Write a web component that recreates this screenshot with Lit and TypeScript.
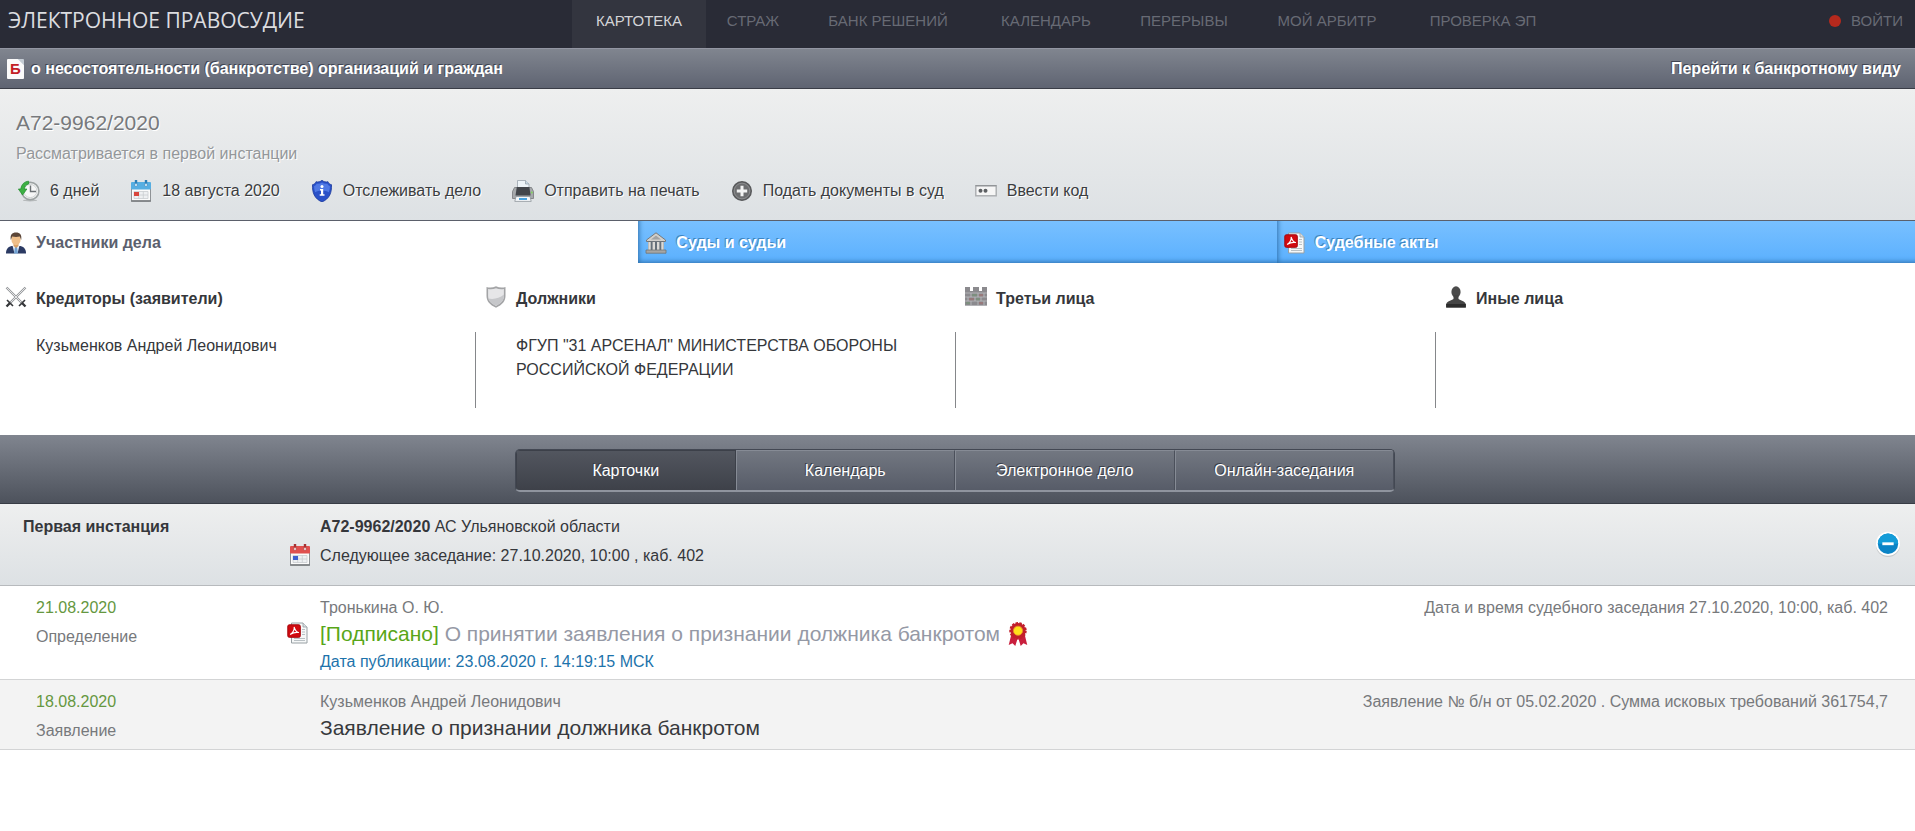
import { LitElement, html, css, svg, nothing, TemplateResult } from "lit";
import { customElement, state } from "lit/decorators.js";
import { classMap } from "lit/directives/class-map.js";

const icon = (body: unknown, width = 22, height = 22) => html`<svg
  class="icon"
  width=${width}
  height=${height}
  viewBox="0 0 22 22"
  aria-hidden="true"
>${body}</svg>`;

const history = icon(svg`
  <ellipse cx="12" cy="20.4" rx="7" ry="1" fill="#000" opacity=".18"/>
  <circle cx="12.3" cy="11" r="8.6" fill="#f6f7f7" stroke="#9da3a3" stroke-width="1.6"/>
  <circle cx="12.3" cy="11" r="6.6" fill="none" stroke="#cfd3d3"/>
  <path d="M12.5 5.5v6h5.5" fill="none" stroke="#6b7174" stroke-width="1.4"/>
  <path d="M10.6 1.2C6.200 1.500 3.400 4.500 2.800 9H.4l4.200 6 4.300-6H6.300c.4-2.500 1.700-4.300 4.300-5z" fill="#3cb043" stroke="#1f8a2c" stroke-width=".7"/>
`);

const calendar = (top: string, ring: string, mark: string) => icon(svg`
  <rect x="1.500" y="3" width="19" height="18" rx="1" fill="#fbfbfb" stroke="#8f9396"/>
  <path d="M1 21h20" stroke="#6f7376" stroke-width="1.400"/>
  <rect x="1" y="2" width="20" height="7.500" rx="1" fill=${top}/>
  <path d="M6 0v5M16 0v5" stroke=${ring} stroke-width="2.400"/>
  <circle cx="6" cy="5" r="1.400" fill="#fff" stroke=${ring} stroke-width=".6"/>
  <circle cx="16" cy="5" r="1.400" fill="#fff" stroke=${ring} stroke-width=".6"/>
  <path d="M4 11.500h14v7H4zM8.700 11.500v7M13.300 11.500v7M4 15h14" fill="#eef0f2" stroke="#c9cdd1" stroke-width=".8"/>
  <rect x="4" y="12" width="5" height="4" fill=${mark}/>
`);

const infoShield = icon(svg`
  <path d="M11 .3c1.800 1.500 3.700 2 6 1.400.6 1.500 1.700 2.700 3.500 3C20.900 12.600 18.500 18.900 11 21.900 3.500 18.900 1.100 12.600 1.500 4.700 3.300 4.400 4.400 3.200 5 1.700c2.300.6 4.200.1 6-1.400z" fill="#2a51c8" stroke="#1c3a9c" stroke-width=".8"/>
  <path d="M11 2.500c1.600 1.100 3.300 1.500 5.300 1.200.6 1.200 1.400 1.900 2.600 2.300 0 2.300-.3 4.300-1.100 6.200-3.400-1.900-10.200-1.900-13.600 0C3.400 10.300 3.100 8.300 3.100 6 4.300 5.600 5.100 4.900 5.700 3.700c2 .3 3.700-.1 5.300-1.200z" fill="#4f78e4"/>
  <circle cx="11" cy="6.400" r="1.500" fill="#fff"/>
  <path d="M9 9h3.200v5.200h1.300v1.600H8.700v-1.600H10v-3.600H9z" fill="#fff"/>
`);

const printer = icon(svg`
  <path d="M5.500 .5h8L17 4v6H5.500z" fill="#eef4f8" stroke="#9aa5ad" stroke-width=".8"/>
  <path d="M13.500 .5V4H17" fill="#c9dbe7" stroke="#9aa5ad" stroke-width=".8"/>
  <path d="M2.500 7.500h17l2 4v7h-21v-7z" fill="#a6a9ac" stroke="#77797c" stroke-width=".8"/>
  <path d="M4.800 7h12.600l1.200 8.500H3.500z" fill="#43464b"/>
  <path d="M4 16.500h14l1.200 4.900H2.800z" fill="#f5f8fa" stroke="#8d9499" stroke-width=".8"/>
  <path d="M7 18h8v2H7z" fill="#4aa3df"/>
  <circle cx="19.800" cy="12.500" r=".9" fill="#7ed957"/>
`);

const plus = icon(svg`
  <circle cx="11" cy="11" r="9.300" fill="#6d6e70" stroke="#58595b" stroke-width="1.400"/>
  <circle cx="11" cy="11" r="7.800" fill="none" stroke="#8b8c8e"/>
  <path d="M11 5.800v10.400M5.800 11h10.400" stroke="#f3f3f3" stroke-width="3"/>
`);

const code = icon(svg`
  <rect x=".8" y="5.800" width="20.400" height="10" fill="#f6f6f6" stroke="#a9acaf" stroke-width="1.400"/>
  <path d="M.5 5.700h21" stroke="#8c8f92"/>
  <circle cx="5.500" cy="10.800" r="2" fill="#5d6063"/>
  <circle cx="10.500" cy="10.800" r="2" fill="#5d6063"/>
`);

const person = icon(svg`
  <path d="M1 21.500c0-4 1.500-6.500 5.500-7.500h9c4 1 5.500 3.500 5.500 7.500z" fill="#2b3a63"/>
  <path d="M7.500 13.500h7L12.500 21.500h-3z" fill="#e9f0f8"/>
  <path d="M10 14.500h2l1 7h-4z" fill="#6f9fd0"/>
  <path d="M8.500 11h5v3L11 16l-2.500-2z" fill="#d9a066"/>
  <ellipse cx="11" cy="7.500" rx="4.600" ry="5.800" fill="#efbf8a"/>
  <path d="M5.800 8C5 2.800 7 .6 11 .6s6 2.200 5.200 7.400l-1.400-3.500c-2.500.6-5.100.6-7.600 0z" fill="#5c4638"/>
`);

const court = icon(svg`
  <path d="M11 .8 20.500 8v1.500h-19V8z" fill="#d2d0cc" stroke="#77787a"/>
  <path d="M11 3.500 16 7.500H6z" fill="#a2a3a5"/>
  <path d="M3 9.500h16V18H3z" fill="#66707a"/>
  <path d="M4.500 10v8M8.800 10v8M13.200 10v8M17.500 10v8" stroke="#dcdad6" stroke-width="2.400"/>
  <path d="M1 18h20v3.200H1z" fill="#a7a6a4" stroke="#707375" stroke-width=".8"/>
`);

const pdf = icon(svg`
  <path d="M4.500 1h11.500l4 4v16H4.500z" fill="#f6f8f8" stroke="#98a0a4"/>
  <path d="M16 1v4h4" fill="#d9e0e2" stroke="#98a0a4" stroke-width=".8"/>
  <path d="M15 7.500h3M15 10h3M15 12.500h3M7 16.500h11M7 18.500h11" stroke="#b9c0c4"/>
  <rect x=".8" y="2.800" width="12.500" height="12.500" rx="1.500" fill="#d10a10" stroke="#a5060b"/>
  <path d="M3.500 12.300C6 10.800 7.600 7.500 7.200 5.400c.9 2.800 2 4.600 4.300 5.100-2.900-.5-5.500.2-8 1.800z" fill="none" stroke="#fff" stroke-width="1.200" stroke-linejoin="round"/>
`);

const swords = icon(svg`
  <path d="M1.500 1.500 17 17M20.500 1.500 5 17" stroke="#97999c" stroke-width="2.400"/>
  <path d="M1.500 1.500 17 17M20.500 1.500 5 17" stroke="#e4e5e6"/>
  <path d="M2 14 8 20M20 14 14 20" stroke="#35373a" stroke-width="1.600"/>
  <path d="M5 17 1.500 20.500M17 17l3.500 3.500" stroke="#35373a" stroke-width="2.400"/>
`);

const greyShield = icon(svg`
  <path d="M11 .3c3 1.300 6.500 1.600 9.500 .6v9.200c0 5-3.200 8.900-9.500 11.700-6.300-2.800-9.500-6.700-9.500-11.700V.9c3 1 6.500 .7 9.500-.6z" fill="#a3a4a6"/>
  <path d="M11 2.200c2.600 1 5.300 1.300 7.900.7v7.200c0 4.300-2.700 7.400-7.900 9.800-5.200-2.400-7.900-5.500-7.900-9.800V2.900c2.600.6 5.300.3 7.900-.7z" fill="#e6e6e8"/>
  <path d="M18.900 8.500v1.600c0 4.300-2.700 7.400-7.900 9.800-4.300-2-6.900-4.400-7.700-7.400 5.800 1.200 11-.3 15.600-4z" fill="#c6c7ca"/>
`);

const wall = icon(svg`
  <path d="M0 1h5v4h3V1h6v4h3V1h5v19H0z" fill="#8b8a8e"/>
  <path d="M0 7h22M0 11h22M0 15h22M0 19.500h22M6 7v4M13 7v4M19 7v4M3 11v4M10 11v4M16 11v4M6 15v4.500M13 15v4.500M19 15v4.500" stroke="#bdbdc0" stroke-width=".8"/>
  <path d="M7 8h5v2.300H7zM11 12h4v2.300h-4zM1 16h4v2.300H1z" fill="#7d8f7f"/>
  <path d="M14 8h4v2.300h-4zM4 12h5v2.300H4zM14 16h4v2.300h-4z" fill="#97797b"/>
`);

const bust = icon(svg`
  <ellipse cx="11" cy="6" rx="4.600" ry="5.700" fill="#4b4b4b"/>
  <path d="M8.500 9h5v4c2 1.700 6.500 1.800 7.300 5.200v3.300H1.200v-3.300C2 14.800 6.500 14.700 8.500 13z" fill="#454545"/>
  <path d="M1.200 18h19.600v3.500H1.200z" fill="#2c2c2c"/>
`);

const award = icon(svg`
  <path d="M5 11 2.500 21l3.500-1.500L8.500 22 11 14l2.500 8 2.500-2.500 3.500 1.500L17 11z" fill="#c91f3d"/>
  <circle cx="11" cy="8" r="7" fill="#c21f2b" stroke="#c21f2b" stroke-width="2" stroke-dasharray="2.200 1.200"/>
  <circle cx="11" cy="8" r="4.200" fill="#ffe01b" stroke="#e8912a" stroke-width=".8"/>
`, 24, 26);

const minus = icon(svg`
  <circle cx="11" cy="11.800" r="10.200" fill="#000" opacity=".12"/>
  <circle cx="11" cy="10.800" r="10.200" fill="#fff"/>
  <circle cx="11" cy="10.800" r="8.600" fill="#0b84c6"/>
  <path d="M2.400 10.800a8.600 8.600 0 0 1 17.200 0z" fill="#139cd8"/>
  <path d="M6.200 10.800h9.600" stroke="#fff" stroke-width="2.400"/>
`, 26, 26);

const NAV = ["КАРТОТЕКА", "СТРАЖ", "БАНК РЕШЕНИЙ", "КАЛЕНДАРЬ", "ПЕРЕРЫВЫ", "МОЙ АРБИТР", "ПРОВЕРКА ЭП"];

const ACTIONS: [TemplateResult, string][] = [
  [history, "6 дней"],
  [calendar("#56aee2", "#2c7fb8", "#d8453c"), "18 августа 2020"],
  [infoShield, "Отслеживать дело"],
  [printer, "Отправить на печать"],
  [plus, "Подать документы в суд"],
  [code, "Ввести код"],
];

const TABS: [TemplateResult, string][] = [
  [person, "Участники дела"],
  [court, "Суды и судьи"],
  [pdf, "Судебные акты"],
];

const PARTIES: { icon: TemplateResult; title: string; names: string[] }[] = [
  { icon: swords, title: "Кредиторы (заявители)", names: ["Кузьменков Андрей Леонидович"] },
  { icon: greyShield, title: "Должники", names: ['ФГУП "31 АРСЕНАЛ" МИНИСТЕРСТВА ОБОРОНЫ РОССИЙСКОЙ ФЕДЕРАЦИИ'] },
  { icon: wall, title: "Третьи лица", names: [] },
  { icon: bust, title: "Иные лица", names: [] },
];

const VIEWS = ["Карточки", "Календарь", "Электронное дело", "Онлайн-заседания"];

interface Entry {
  date: string;
  type: string;
  who: string;
  title: string;
  note: string;
  signed?: boolean;
  published?: string;
}

const ENTRIES: Entry[] = [
  {
    date: "21.08.2020",
    type: "Определение",
    who: "Тронькина О. Ю.",
    title: "О принятии заявления о признании должника банкротом",
    note: "Дата и время судебного заседания 27.10.2020, 10:00, каб. 402",
    signed: true,
    published: "Дата публикации: 23.08.2020 г. 14:19:15 МСК",
  },
  {
    date: "18.08.2020",
    type: "Заявление",
    who: "Кузьменков Андрей Леонидович",
    title: "Заявление о признании должника банкротом",
    note: "Заявление № б/н от 05.02.2020 . Сумма исковых требований 361754,7",
  },
];

@customElement("app-root")
export class AppRoot extends LitElement {
  @state() private tab = 0;
  @state() private view = 0;
  @state() private open = true;

  static styles = css`
    :host {
      display: block;
      min-height: 100vh;
      background: #fff;
      color: #35373b;
      font: 16px/24px "Liberation Sans", Arial, sans-serif;
    }
    * { box-sizing: border-box; }
    a { color: inherit; text-decoration: none; }
    button { font: inherit; color: inherit; background: none; border: 0; padding: 0; text-align: left; cursor: pointer; }
    h1, h2, p, ul { margin: 0; padding: 0; font-size: inherit; list-style: none; }
    .icon { display: block; flex: none; }

    .top { display: flex; height: 48px; background: #292b36; color: #676a74; font-size: 15px; line-height: 41px; white-space: nowrap; }
    .brand { flex: 0 0 572px; padding-left: 8px; color: #dcdde0; font: 21px/40px "Open Sans", "Noto Sans", sans-serif; }
    .nav { display: grid; grid-template-columns: 134px 94px 176px 140px 136px 150px 162px; text-align: center; }
    .nav-link.current { background: #33353f; color: #d3d4d7; }
    .login { display: flex; align-items: center; gap: 10px; height: 41px; margin-left: auto; padding-right: 12px; }
    .dot { width: 12px; height: 12px; border-radius: 50%; background: #b5291d; }

    .band {
      display: flex; align-items: center; justify-content: space-between;
      height: 41px; padding: 0 14px 0 7px;
      border-top: 1px solid #9396a3; border-bottom: 1px solid #3a3d47;
      background: linear-gradient(#80858f, #5f6472);
      color: #fff; font-weight: bold; text-shadow: -1px -1px 0 #3f4452;
    }
    .band-title { display: flex; align-items: center; gap: 7px; }
    .letter {
      width: 17px; height: 20px; border-radius: 1px; background: linear-gradient(225deg, #c4ccd4 4px, #fbfbfb 5px);
      color: #c32026; font-size: 15px; line-height: 20px; text-align: center; text-shadow: none;
    }

    .case {
      padding: 21px 16px 0; height: 132px;
      border-bottom: 1px solid #5b606b;
      background: linear-gradient(#eeefef, #dde1e4);
      text-shadow: 1px 1px 0 #fff;
    }
    .case-number { font-size: 21px; line-height: 26px; font-weight: normal; color: #77797c; }
    .case-state { padding-top: 6px; color: #94979a; }
    .actions { display: flex; flex-wrap: wrap; gap: 0 31px; padding: 13px 2px 0; color: #3b3d40; }
    .action { display: flex; align-items: center; gap: 10px; text-shadow: inherit; }

    .tabs { display: grid; grid-template-columns: repeat(3, 1fr); height: 42px; font-weight: bold; }
    .tab {
      display: flex; align-items: center; gap: 9px; padding: 1px 0 0 7px; color: #fff;
      background: linear-gradient(#78c0ff, #5bb0fe);
      box-shadow: inset 5px -5px 5px -4px #2f70aa;
      text-shadow: -1px -1px 0 #3d84c2;
    }
    .tab.active { padding-left: 5px; background: #fff; box-shadow: none; text-shadow: none; color: #5b606e; }

    .parties-wrap { overflow: hidden; padding: 23px 0 27px; }
    .parties { display: grid; grid-template-columns: repeat(4, 1fr); margin-right: -5px; }
    .party-head { display: flex; align-items: flex-start; gap: 9px; padding-left: 5px; font-weight: bold; line-height: 26px; }
    .party-list { min-height: 76px; margin: 20px 4px 0 0; padding: 2px 36px 0; border-right: 1px solid #85878a; }
    .party:last-child .party-list { border: 0; }

    .views {
      display: flex; justify-content: center; padding: 14px 5px 11px 0;
      border-bottom: 1px solid #383c45;
      background: linear-gradient(#80858f, #4d525c);
    }
    .view-group {
      display: grid; grid-template-columns: repeat(4, 1fr); width: 100%; max-width: 880px; overflow: hidden;
      border: 1px solid #434853; border-bottom: 2px solid #8f949e; border-radius: 5px;
    }
    .view {
      height: 40px; border-left: 1px solid #868b95; border-top: 1px solid #868b95; border-right: 1px solid #4b505b;
      background: linear-gradient(#727781, #575c68);
      color: #fff; text-align: center; text-shadow: -1px -1px 0 #3a3e48;
    }
    .view.active { border-color: #3c4049; background: linear-gradient(#52565f, #3e4149); }

    .instance, .entry { display: grid; grid-template-columns: 284px 36px 1fr auto; }
    .instance {
      height: 82px; padding-top: 11px; border-bottom: 1px solid #b7babd;
      background: linear-gradient(#eeefef, #dde1e4);
    }
    .instance-name { padding-left: 23px; font-weight: bold; }
    .instance-icon { padding: 29px 0 0 5px; }
    .instance-info { line-height: 29px; margin-top: -3px; }
    .toggle { align-self: start; margin: 16px 14px 0 0; }

    .entry { min-height: 70px; padding-top: 10px; border-bottom: 1px solid #d3d4d5; color: #77797c; }
    .entry.alt { background: #f3f3f3; }
    .entry-left { padding-left: 36px; }
    .date { color: #659740; }
    .type { padding-top: 5px; }
    .entry-icon { padding: 26px 0 0 3px; }
    .entry-title { display: flex; align-items: center; gap: 6px; height: 28px; font-size: 21px; line-height: 28px; color: #37393c; }
    .signed-title { color: #9599a5; }
    .signed { color: #58a618; }
    .published { display: block; padding: 2px 0 5px; color: #1d73ab; }
    .note { padding-right: 27px; text-align: right; }
  `;

  render() {
    return html`
      <header class="top">
        <a class="brand" href="#">ЭЛЕКТРОННОЕ ПРАВОСУДИЕ</a>
        <nav class="nav">
          ${NAV.map((n, i) => html`<a href="#" class=${classMap({ "nav-link": true, current: i === 0 })}>${n}</a>`)}
        </nav>
        <a class="login" href="#"><span class="dot"></span>ВОЙТИ</a>
      </header>
      <div class="band">
        <div class="band-title"><span class="letter">Б</span>о несостоятельности (банкротстве) организаций и граждан</div>
        <a href="#">Перейти к банкротному виду</a>
      </div>
      <section class="case">
        <h1 class="case-number">А72-9962/2020</h1>
        <p class="case-state">Рассматривается в первой инстанции</p>
        <div class="actions">
          ${ACTIONS.map(([i, t]) => html`<button class="action">${i}${t}</button>`)}
        </div>
      </section>
      <div class="tabs" role="tablist">
        ${TABS.map(([ic, t], i) => html`<button
          role="tab"
          aria-selected=${this.tab === i}
          class=${classMap({ tab: true, active: this.tab === i })}
          @click=${() => (this.tab = i)}
        >${ic}${t}</button>`)}
      </div>
      <section class="parties-wrap">
        <div class="parties">
          ${PARTIES.map((p) => html`<div class="party">
            <h2 class="party-head">${p.icon}${p.title}</h2>
            <ul class="party-list">${p.names.map((n) => html`<li><a href="#">${n}</a></li>`)}</ul>
          </div>`)}
        </div>
      </section>
      <div class="views">
        <div class="view-group">
          ${VIEWS.map((v, i) => html`<button
            class=${classMap({ view: true, active: this.view === i })}
            @click=${() => (this.view = i)}
          >${v}</button>`)}
        </div>
      </div>
      <section class="instance">
        <h2 class="instance-name">Первая инстанция</h2>
        <div class="instance-icon">${calendar("#e0504f", "#a83232", "#3f5fd0")}</div>
        <div class="instance-info">
          <p><b>А72-9962/2020</b> АС Ульяновской области</p>
          <p>Следующее заседание: 27.10.2020, 10:00 , каб. 402</p>
        </div>
        <button class="toggle" aria-label="Свернуть" @click=${() => (this.open = !this.open)}>${minus}</button>
      </section>
      ${this.open ? ENTRIES.map((e, i) => this.entry(e, i)) : nothing}
    `;
  }

  private entry(e: Entry, i: number) {
    return html`<article class=${classMap({ entry: true, alt: i % 2 === 1 })}>
      <div class="entry-left">
        <p class="date">${e.date}</p>
        <p class="type">${e.type}</p>
      </div>
      <div class="entry-icon">${e.signed ? pdf : nothing}</div>
      <div>
        <p>${e.who}</p>
        <a href="#" class=${classMap({ "entry-title": true, "signed-title": !!e.signed })}>
          <span>${e.signed ? html`<span class="signed">[Подписано]</span> ` : nothing}${e.title}</span>
          ${e.signed ? award : nothing}
        </a>
        ${e.published ? html`<span class="published">${e.published}</span>` : nothing}
      </div>
      <p class="note">${e.note}</p>
    </article>`;
  }
}
